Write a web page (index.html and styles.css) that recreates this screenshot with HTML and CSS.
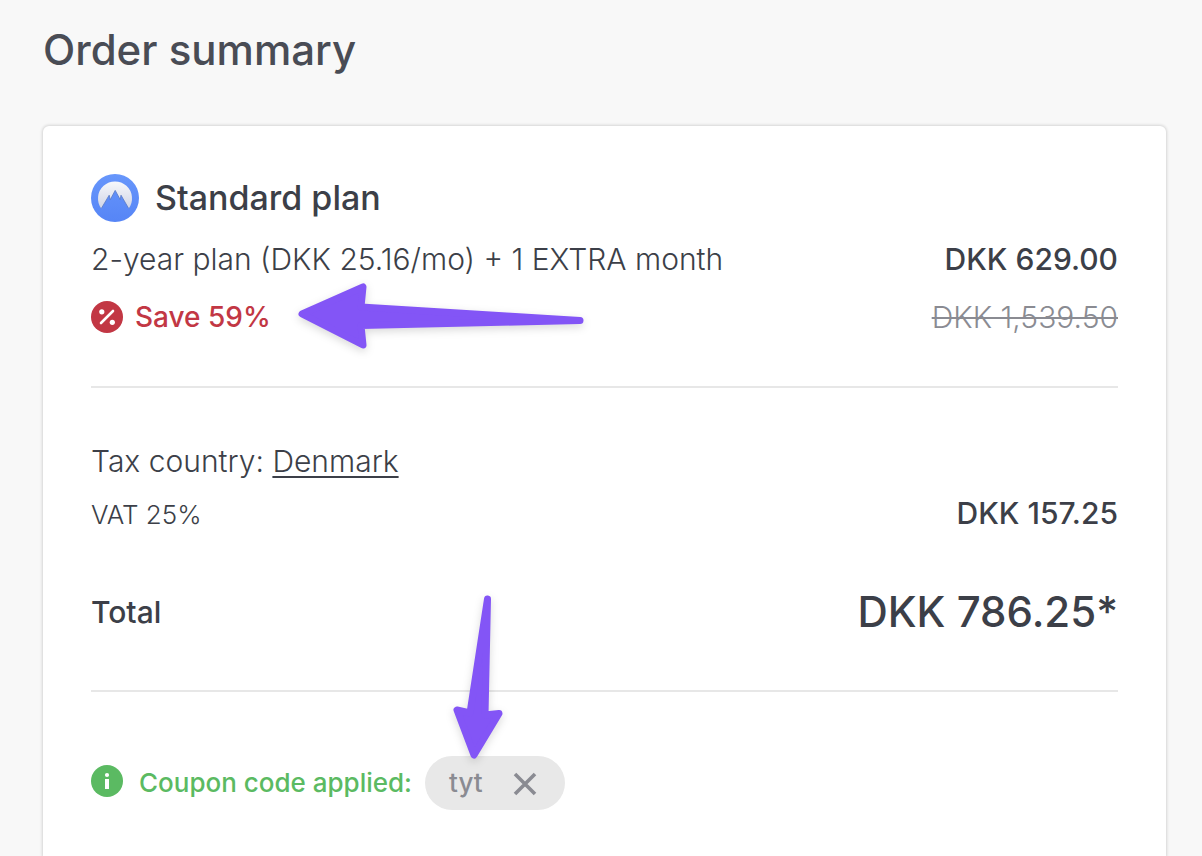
FILE: index.html
```html
<!DOCTYPE html>
<html lang="en">
<head>
<meta charset="utf-8">
<meta name="viewport" content="width=device-width, initial-scale=1">
<title>Order summary</title>
<link rel="stylesheet" href="styles.css">
</head>
<body>
<main class="page">
  <h1 class="page-title">Order summary</h1>
  <section class="card">
    <div class="plan">
      <header class="plan-head">
        <svg class="plan-logo" viewBox="0 0 48 48" aria-hidden="true">
          <defs>
            <linearGradient id="sky" x1="0" y1="0" x2="0" y2="1"><stop offset="0" stop-color="#6796fb"/><stop offset="1" stop-color="#5685f6"/></linearGradient>
            <linearGradient id="snow" x1="0" y1="0" x2="0" y2="1"><stop offset="0" stop-color="#f7f8fb"/><stop offset="1" stop-color="#d0d5e6"/></linearGradient>
          </defs>
          <circle cx="24" cy="24" r="24" fill="url(#sky)"/>
          <path d="M10.300 34.500A17 17 0 1 1 37.700 34.500L30 21.200L29.200 25.600L24.200 16.400L20 24.200L19.200 25.800L18.200 21.200Z" fill="url(#snow)"/>
          <path d="M10.300 34.500L18.200 21.200L19.200 25.800L24.200 16.400L29.200 25.600L30 21.200L37.700 34.500" fill="none" stroke="#5878c4" stroke-width=".8"/>
        </svg>
        <h2 class="plan-name">Standard plan</h2>
      </header>
      <div class="row">
        <span class="text">2-year plan (DKK 25.16/mo) + 1 EXTRA month</span>
        <span class="price">DKK 629.00</span>
      </div>
      <div class="row row-save">
        <span class="save">
          <svg class="badge" viewBox="0 0 32 32" aria-hidden="true">
            <circle cx="16" cy="16" r="16" fill="#c23744"/>
            <path d="M10 22L22 10" stroke="#fff" stroke-width="2.600" stroke-linecap="round"/>
            <circle cx="10.800" cy="10.800" r="2.600" fill="#fff"/><circle cx="21.300" cy="21.300" r="2.600" fill="#fff"/>
          </svg>
          Save 59%
        </span>
        <del class="old-price">DKK 1,539.50</del>
        <svg class="arrow arrow-left" viewBox="0 0 290 70" aria-hidden="true">
          <path d="M6 32L67 5L65 25L284 38.500L65 43.500L67 63Z"/>
        </svg>
      </div>
    </div>
    <div class="costs">
      <div class="row">
        <span class="text">Tax country: <a class="country" href="#">Denmark</a></span>
      </div>
      <div class="row row-vat">
        <span class="vat">VAT 25%</span>
        <span class="price">DKK 157.25</span>
      </div>
      <div class="row row-total">
        <span class="price">Total</span>
        <strong class="total">DKK 786.25*</strong>
      </div>
    </div>
    <div class="coupon">
      <svg class="badge badge-info" viewBox="0 0 32 32" aria-hidden="true">
        <circle cx="16" cy="16" r="16" fill="#5bba62"/>
        <circle cx="16" cy="10" r="2.100" fill="#fff"/><path d="M14 14h4v10h-4z" fill="#fff"/>
      </svg>
      <span class="coupon-label">Coupon code applied:</span>
      <span class="chip">
        tyt
        <button class="chip-remove" type="button" aria-label="Remove coupon">
          <svg viewBox="0 0 24 24" aria-hidden="true"><path d="M2 3L22 23M22 3L2 23" fill="none" stroke="#8a8b92" stroke-width="3.600"/></svg>
        </button>
        <svg class="arrow arrow-down" viewBox="0 0 60 170" aria-hidden="true">
          <path d="M37.500 7L35 123L49 121.500L24 163L7 118L20 121Z"/>
        </svg>
      </span>
    </div>
  </section>
</main>
</body>
</html>
```
FILE: styles.css
```css
* { box-sizing: border-box; }
body {
  margin: 0;
  background: #f8f8f8;
  color: #3c3f48;
  font-family: Inter, "Liberation Sans", sans-serif;
  font-size: 30px;
  line-height: 44px;
}
.page {
  display: flex;
  flex-direction: column;
  min-height: 100vh;
  padding: 22px 36px 0 43px;
}
.page-title {
  margin: 0 0 48px;
  color: #494c55;
  font-size: 42px;
  font-weight: 500;
  line-height: 56px;
}
.card {
  flex: 1;
  padding: 48px 48px 44px;
  background: #fff;
  border-radius: 6px 6px 0 0;
  box-shadow: 0 0 3px 1px rgb(0 0 0 / 14%);
}
.plan { padding-bottom: 47px; border-bottom: 2px solid #e7e7e7; }
.plan-head { display: flex; align-items: center; gap: 16px; margin-bottom: 15px; }
.plan-logo { width: 48px; height: 48px; }
.plan-name { margin: 0; font-size: 34px; font-weight: 500; }
.row { display: flex; align-items: center; justify-content: space-between; gap: 16px; }
.text { font-weight: 300; }
.price { font-weight: 500; }
.row-save { position: relative; margin-top: 14px; }
.save { display: flex; align-items: center; gap: 12px; color: #c23744; font-size: 28px; font-weight: 500; }
.badge { flex: none; width: 32px; height: 32px; }
.badge-info { margin-bottom: 4px; }
.old-price { color: #8a8b92; font-weight: 300; text-decoration-thickness: 2px; }
.costs { padding: 51px 0 50px; border-bottom: 2px solid #e7e7e7; }
.country { color: inherit; text-decoration-thickness: 2px; text-underline-offset: 4px; }
.row-vat { align-items: baseline; margin-top: 8px; }
.vat { font-size: 26px; font-weight: 300; }
.row-total { margin-top: 47px; }
.total { font-size: 42px; font-weight: 500; line-height: 56px; }
.coupon { display: flex; align-items: center; padding-top: 64px; }
.coupon-label { margin-left: 16px; color: #5bba62; font-size: 26px; font-weight: 500; }
.chip {
  position: relative;
  display: flex;
  align-items: center;
  gap: 30px;
  margin-left: 13px;
  padding: 5px 28px 5px 24px;
  border-radius: 27px;
  background: #e8e8e8;
  color: #8a8b92;
  font-size: 26px;
  font-weight: 500;
}
.chip-remove { display: flex; padding: 0; border: 0; background: none; cursor: pointer; }
.chip-remove svg { width: 24px; height: 24px; overflow: visible; }
.arrow {
  position: absolute;
  fill: #8355f6;
  stroke: #8355f6;
  stroke-width: 7px;
  stroke-linejoin: round;
  filter: drop-shadow(0 3px 4px rgb(0 0 0 / 15%));
  pointer-events: none;
}
.arrow-left { left: 205px; top: -13px; width: 290px; height: 70px; }
.arrow-down { left: 25px; top: -164px; width: 60px; height: 170px; }
```
